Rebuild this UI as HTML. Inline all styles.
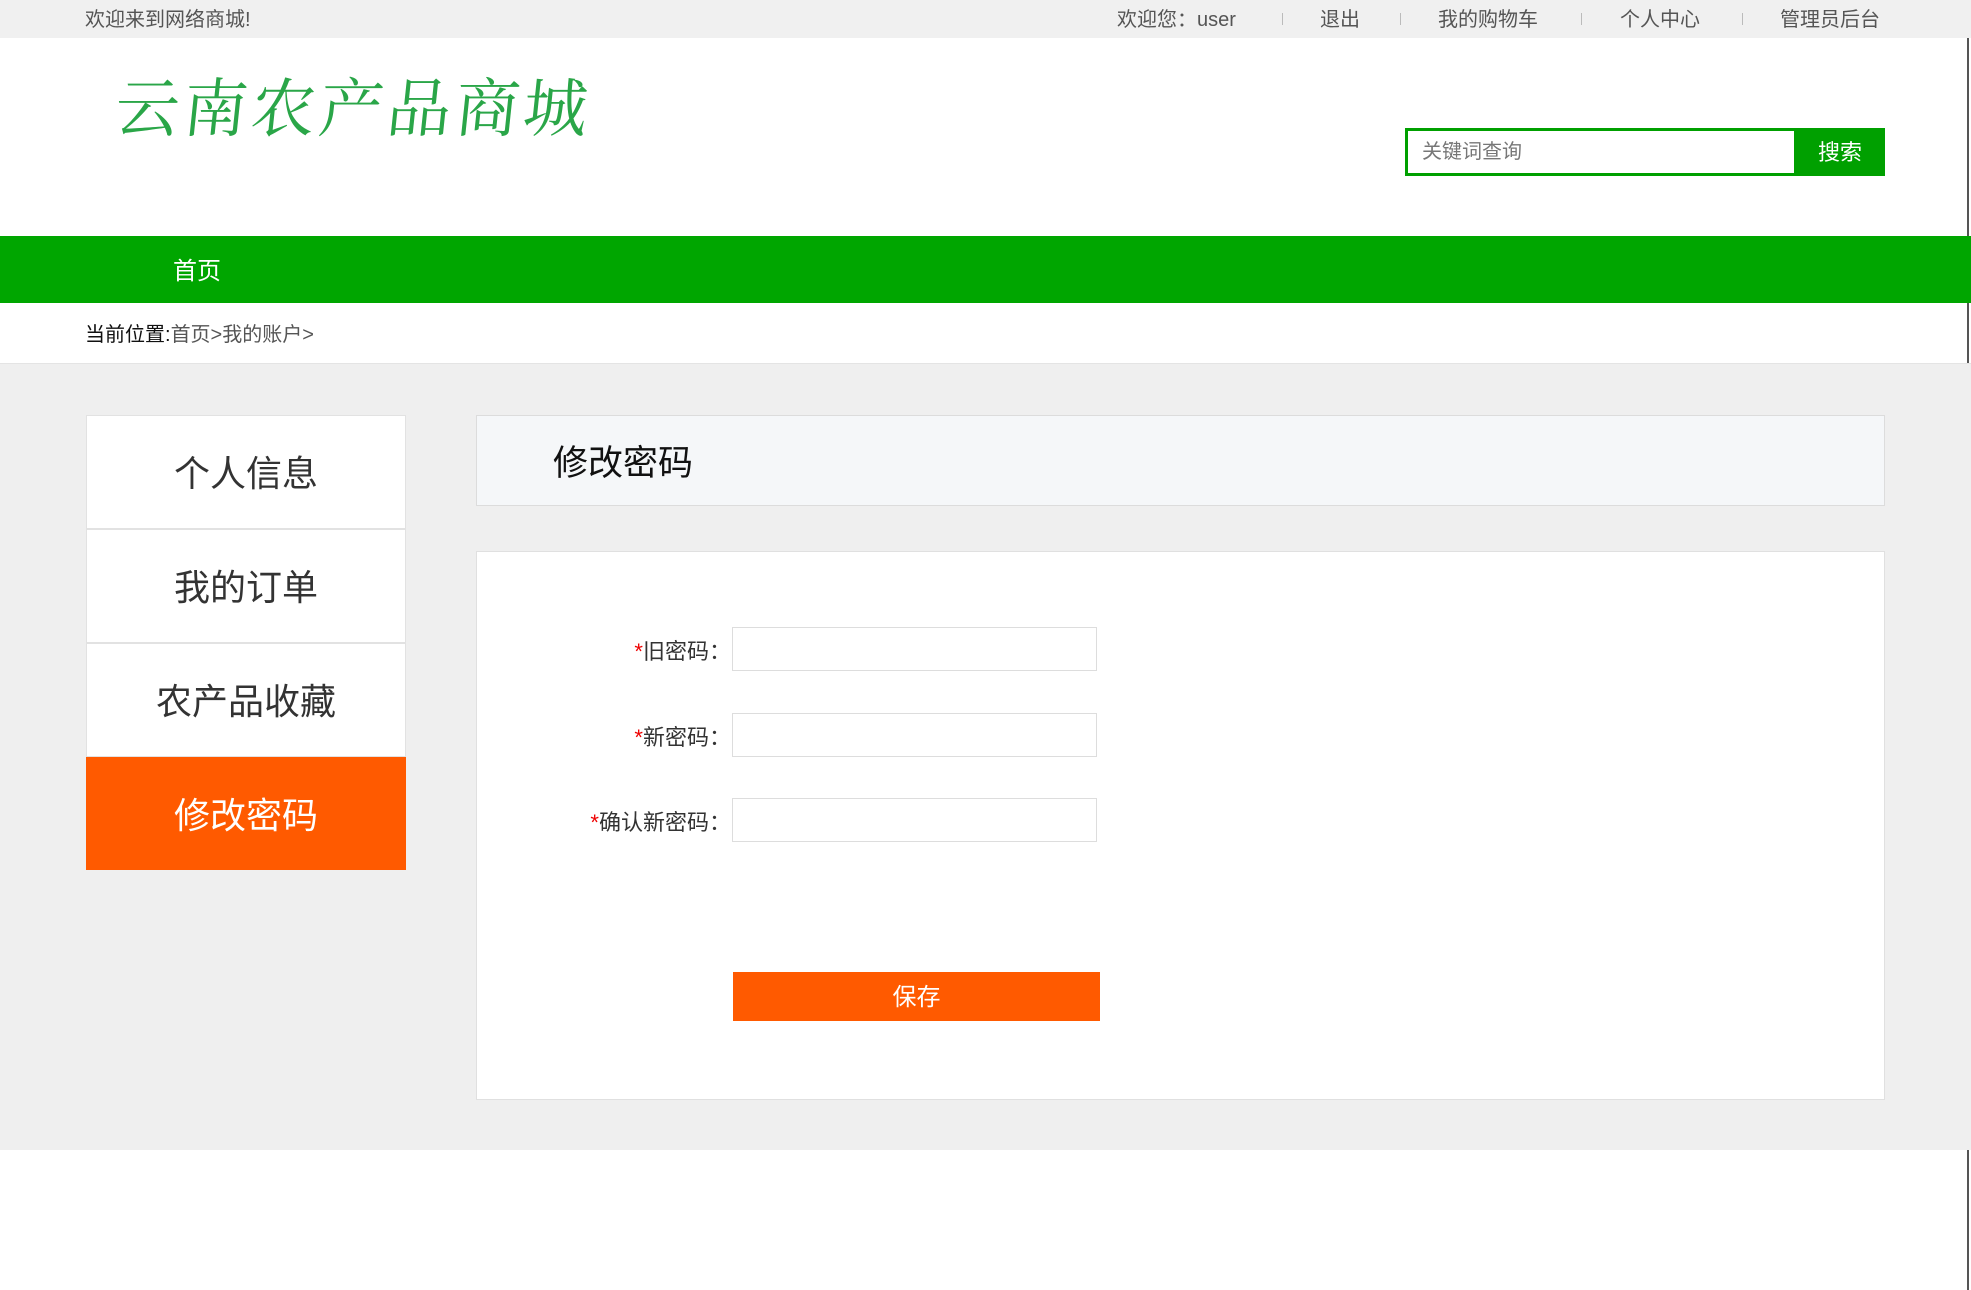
<!DOCTYPE html>
<html><head><meta charset="utf-8"><style>
*{margin:0;padding:0;box-sizing:border-box}
body{width:1971px;height:1290px;position:relative;background:#fff;font-family:"Liberation Sans","Noto Sans CJK SC",sans-serif;overflow:hidden;color:#333}
.a{position:absolute;white-space:nowrap}
.top{left:0;top:0;width:1971px;height:38px;background:#f0f0f0}
.tt{font-size:20px;color:#555;top:7px;line-height:26px}
.sep{top:13px;width:1px;height:12px;background:#bbb}
.nav{left:0;top:236px;width:1971px;height:67px;background:#00a600}
.gray{left:0;top:363px;width:1971px;height:787px;background:#efefef;border-top:1px solid #e4e4e4}
.side{left:86px;width:320px;height:114px;background:#fff;border:1px solid #e2e2e2;font-size:36px;color:#333;text-align:center;line-height:116px}
.inp{left:732px;width:365px;height:44px;background:#fff;border:1px solid #ddd}
.lbl{font-size:22px;color:#333;right:1240px;line-height:30px}
.lbl b{color:#e00;font-weight:normal}
</style></head><body>
<div class="a top"></div>
<div class="a tt" style="left:85px">欢迎来到网络商城!</div>
<div class="a tt" style="left:1117px">欢迎您：user</div>
<div class="a sep" style="left:1282px"></div>
<div class="a tt" style="left:1320px">退出</div>
<div class="a sep" style="left:1400px"></div>
<div class="a tt" style="left:1438px">我的购物车</div>
<div class="a sep" style="left:1581px"></div>
<div class="a tt" style="left:1620px">个人中心</div>
<div class="a sep" style="left:1742px"></div>
<div class="a tt" style="left:1780px">管理员后台</div>
<div class="a" style="left:1967px;top:38px;width:2px;height:1252px;background:#555"></div>

<div class="a" style="left:116px;top:64px;font-family:'Noto Serif CJK SC',serif;font-size:64px;color:#2aa648;letter-spacing:4px;line-height:80px;transform:skewX(-6deg)">云南农产品商城</div>

<div class="a" style="left:1405px;top:128px;width:392px;height:48px;border:3px solid #00a000;background:#fff"></div>
<div class="a" style="left:1422px;top:139px;font-size:20px;color:#777;line-height:26px">关键词查询</div>
<div class="a" style="left:1795px;top:128px;width:90px;height:48px;background:#00a000;color:#fff;font-size:22px;text-align:center;line-height:50px">搜索</div>

<div class="a nav"></div>
<div class="a" style="left:173px;top:257px;font-size:24px;color:#fff;line-height:30px">首页</div>
<div class="a" style="left:85px;top:322px;font-size:20px;line-height:26px;color:#111">当前位置:<span style="color:#555">首页&gt;我的账户&gt;</span></div>

<div class="a gray"></div>
<div class="a side" style="top:415px">个人信息</div>
<div class="a side" style="top:529px">我的订单</div>
<div class="a side" style="top:643px">农产品收藏</div>
<div class="a side" style="top:757px;height:113px;background:#ff5a00;border-color:#ff5a00;color:#fff">修改密码</div>

<div class="a" style="left:476px;top:415px;width:1409px;height:91px;background:#f5f7f9;border:1px solid #dcdcdc"></div>
<div class="a" style="left:553px;top:442px;font-size:35px;color:#111;line-height:44px">修改密码</div>

<div class="a" style="left:476px;top:551px;width:1409px;height:549px;background:#fff;border:1px solid #e0e0e0"></div>
<div class="a lbl" style="top:637px"><b>*</b>旧密码：</div>
<div class="a inp" style="top:627px"></div>
<div class="a lbl" style="top:723px"><b>*</b>新密码：</div>
<div class="a inp" style="top:713px"></div>
<div class="a lbl" style="top:808px"><b>*</b>确认新密码：</div>
<div class="a inp" style="top:798px"></div>
<div class="a" style="left:733px;top:972px;width:367px;height:49px;background:#ff5a00;color:#fff;font-size:24px;text-align:center;line-height:52px">保存</div>
</body></html>
